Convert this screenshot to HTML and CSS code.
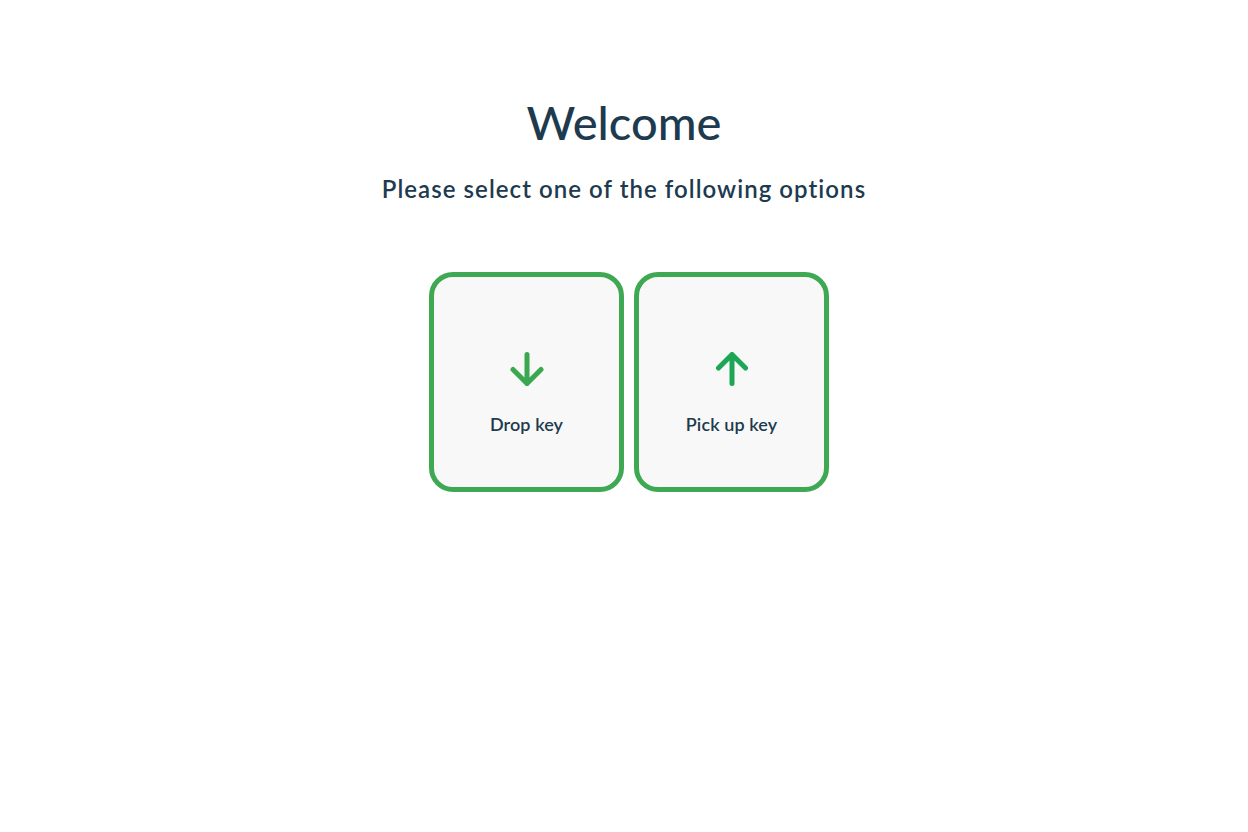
FILE: index.html
```html
<!DOCTYPE html>
<html lang="en">
<head>
  <meta charset="UTF-8" />
  <title>Welcome</title>
  <link rel="stylesheet" href="styles.css">
</head>
<body>
  <div class="page">
    <h1 class="title">Welcome</h1>
    <p class="subtitle">Please select one of the following options</p>

    <div class="options">
      <button class="option">
        <svg class="icon icon-down" width="34" height="34" viewBox="0 0 34 34">
          <path d="M17 2.5V31.5M3 17.5L17 31.5L31 17.5" />
        </svg>
        <span class="label">Drop key</span>
      </button>
      <button class="option">
        <svg class="icon icon-up" width="34" height="34" viewBox="0 0 34 34">
          <path d="M17 31.5V2.5M3.5 16L17 2.5L30.5 16" />
        </svg>
        <span class="label">Pick up key</span>
      </button>
    </div>
  </div>
</body>
</html>
```

FILE: styles.css
```css
body {
  margin: 0;
  background: #fff;
  font-family: Lato, "Open Sans", Arial, sans-serif;
  color: #1d3a4e;
}
.page {
  display: flex;
  flex-direction: column;
  align-items: center;
  padding-top: 92px;
}
.title {
  margin: 0;
  font-size: 47px;
  font-weight: 500;
  line-height: 60px;
}
.subtitle {
  margin: 22px 0 0;
  font-size: 24px;
  font-weight: 600;
  letter-spacing: 1.05px;
  line-height: 30px;
}
.options {
  display: flex;
  gap: 10px;
  margin-top: 68px;
  padding-left: 10px;
}
.option {
  width: 195px;
  height: 220px;
  box-sizing: border-box;
  border: 5px solid #3fa853;
  border-radius: 24px;
  background: #f8f8f8;
  display: flex;
  flex-direction: column;
  align-items: center;
  justify-content: center;
  padding: 23px 0 0;
  font-family: inherit;
  color: inherit;
  cursor: pointer;
}
.icon {
  fill: none;
  stroke-width: 5;
  stroke-linecap: round;
  stroke-linejoin: round;
}
.icon-down {
  stroke: #3aa84f;
}
.icon-up {
  stroke: #1da656;
}
.label {
  margin-top: 27px;
  font-size: 18px;
  font-weight: 600;
  letter-spacing: 0.1px;
}
```
